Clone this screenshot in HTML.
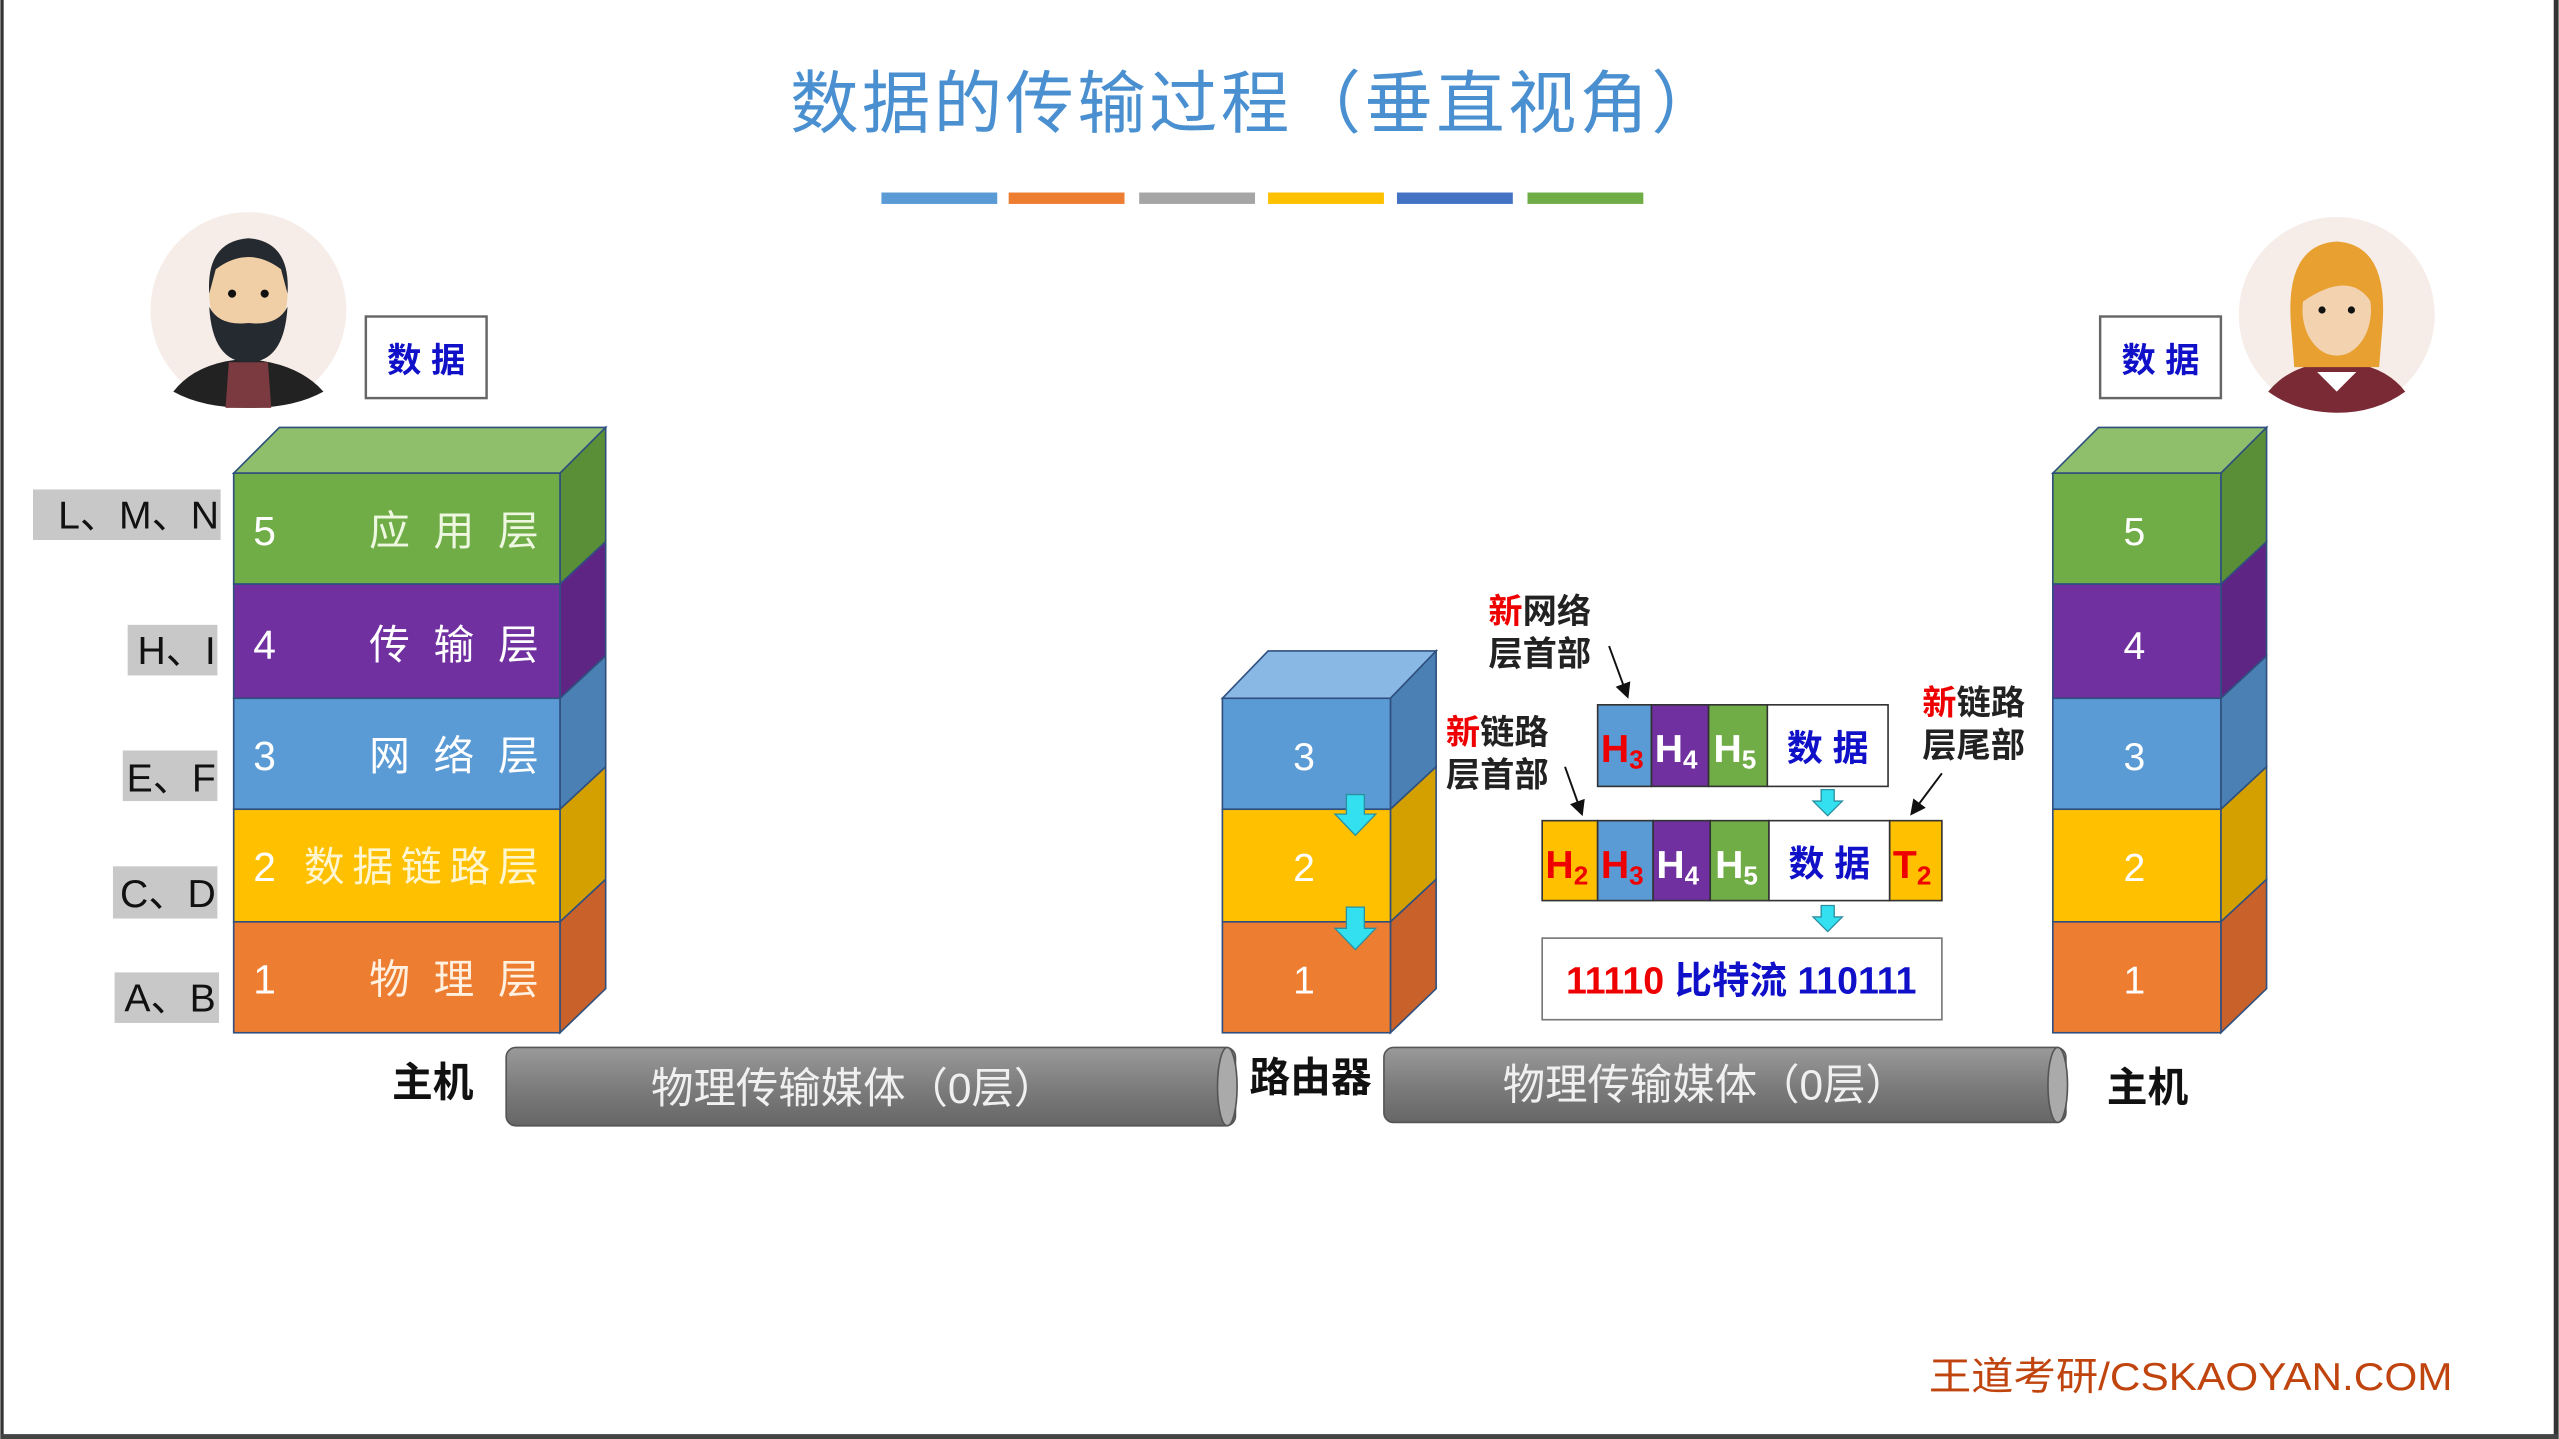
<!DOCTYPE html>
<html><head><meta charset="utf-8"><style>
html,body{margin:0;padding:0;background:#fff;overflow:hidden}
svg{display:block}
text{font-family:"Liberation Sans","Noto Sans CJK SC",sans-serif}
</style></head><body>
<svg width="2559" height="1439" viewBox="0 0 1568 882" xmlns="http://www.w3.org/2000/svg">
<defs>
<linearGradient id="pipe" x1="0" y1="0" x2="0" y2="1">
<stop offset="0" stop-color="#9a9a9a"/><stop offset="0.5" stop-color="#7d7d7d"/><stop offset="1" stop-color="#666"/>
</linearGradient>
<marker id="ah" markerWidth="8" markerHeight="8" refX="6" refY="4" orient="auto"><path d="M0,0 L8,4 L0,8 Z" fill="#111"/></marker>
</defs>
<rect width="1568" height="882" fill="#fff"/>
<rect x="0" y="0" width="2" height="882" fill="#333"/>
<rect x="1565" y="0" width="3" height="882" fill="#333"/>
<rect x="0" y="879" width="1568" height="3" fill="#444"/>

<text x="770" y="78" font-size="42" fill="#4a90d0" text-anchor="middle" letter-spacing="2">数据的传输过程（垂直视角）</text>
<rect x="540" y="118" width="71" height="7" fill="#5b9bd5"/>
<rect x="618" y="118" width="71" height="7" fill="#ed7d31"/>
<rect x="698" y="118" width="71" height="7" fill="#a5a5a5"/>
<rect x="777" y="118" width="71" height="7" fill="#ffc000"/>
<rect x="856" y="118" width="71" height="7" fill="#4472c4"/>
<rect x="936" y="118" width="71" height="7" fill="#70ad47"/>

<!-- avatars -->
<circle cx="152" cy="190" r="60" fill="#f6ece8"/>
<path d="M106,240 Q120,222 150,220 Q182,222 198,240 Q180,250 152,250 Q124,250 106,240Z" fill="#222"/>
<path d="M140,222 L164,222 L166,250 L138,250Z" fill="#7a3a40"/>
<ellipse cx="152" cy="180" rx="24" ry="32" fill="#f0cfa6"/>
<path d="M128,180 Q126,148 152,146 Q178,148 176,180 L172,165 Q152,150 132,165Z" fill="#252a30"/>
<path d="M128,188 Q130,222 152,222 Q174,222 176,188 Q170,200 152,198 Q134,200 128,188Z" fill="#252a30"/>
<circle cx="142" cy="180" r="2.5" fill="#111"/><circle cx="162" cy="180" r="2.5" fill="#111"/>

<circle cx="1432" cy="193" r="60" fill="#f6ece8"/>
<path d="M1390,240 Q1405,222 1432,222 Q1460,222 1474,240 Q1456,253 1432,253 Q1408,253 1390,240Z" fill="#7a2a35"/>
<path d="M1420,228 L1432,240 L1444,228Z" fill="#fff"/>
<path d="M1404,200 Q1400,150 1432,148 Q1464,150 1460,200 L1458,225 L1406,225Z" fill="#e8a030"/>
<ellipse cx="1432" cy="190" rx="21" ry="28" fill="#f3d2b0"/>
<path d="M1411,185 Q1414,155 1440,160 Q1452,170 1453,185 Q1440,165 1411,185Z" fill="#e8a030"/>
<circle cx="1423" cy="190" r="2.2" fill="#111"/><circle cx="1441" cy="190" r="2.2" fill="#111"/>

<!-- data boxes -->
<rect x="224" y="194" width="74" height="50" fill="#fff" stroke="#666" stroke-width="1.5"/>
<text x="261" y="228" font-size="21" font-weight="bold" fill="#1010c8" text-anchor="middle">数 据</text>
<rect x="1287" y="194" width="74" height="50" fill="#fff" stroke="#666" stroke-width="1.5"/>
<text x="1324" y="228" font-size="21" font-weight="bold" fill="#1010c8" text-anchor="middle">数 据</text>

<!-- left stack -->
<g stroke="#2f4f7f" stroke-width="1">
<path d="M143,290 L171,262 L371,262 L343,290Z" fill="#8fbf6a"/>
<path d="M343,290 L371,262 L371,332 L343,358Z" fill="#5a8f38"/>
<path d="M343,358 L371,332 L371,402 L343,428Z" fill="#5e2585"/>
<path d="M343,428 L371,402 L371,470 L343,496Z" fill="#4a80b4"/>
<path d="M343,496 L371,470 L371,539 L343,565Z" fill="#d4a000"/>
<path d="M343,565 L371,539 L371,606 L343,633Z" fill="#c8622a"/>
<rect x="143" y="290" width="200" height="68" fill="#70ad47"/>
<rect x="143" y="358" width="200" height="70" fill="#7030a0"/>
<rect x="143" y="428" width="200" height="68" fill="#5b9bd5"/>
<rect x="143" y="496" width="200" height="69" fill="#ffc000"/>
<rect x="143" y="565" width="200" height="68" fill="#ed7d31"/>
</g>
<g font-size="25" fill="#fff">
<text x="155" y="334">5</text><text x="226" y="334" fill="#eef7e0" textLength="104" lengthAdjust="spacing">应用层</text>
<text x="155" y="404">4</text><text x="226" y="404" textLength="104" lengthAdjust="spacing">传输层</text>
<text x="155" y="472">3</text><text x="226" y="472" textLength="104" lengthAdjust="spacing">网络层</text>
<text x="155" y="540">2</text><text x="186" y="540" fill="#fff6d0" textLength="144" lengthAdjust="spacing">数据链路层</text>
<text x="155" y="609">1</text><text x="226" y="609" fill="#fff0e0" textLength="104" lengthAdjust="spacing">物理层</text>
</g>
<g fill="#c8c8c8">
<rect x="20" y="300" width="115" height="31"/>
<rect x="78" y="383" width="55" height="31"/>
<rect x="75" y="460" width="58" height="31"/>
<rect x="69" y="531" width="64" height="32"/>
<rect x="70" y="596" width="64" height="31"/>
</g>
<g font-size="24" fill="#111" text-anchor="end">
<text x="134" y="324">L、M、N</text>
<text x="132" y="407">H、I</text>
<text x="132" y="485">E、F</text>
<text x="132" y="556">C、D</text>
<text x="132" y="620">A、B</text>
</g>

<!-- router -->
<g stroke="#2f4f7f" stroke-width="1">
<path d="M749,428 L777,399 L880,399 L852,428Z" fill="#8ab8e4"/>
<path d="M852,428 L880,399 L880,470 L852,496Z" fill="#4a80b4"/>
<path d="M852,496 L880,470 L880,539 L852,565Z" fill="#d4a000"/>
<path d="M852,565 L880,539 L880,606 L852,633Z" fill="#c8622a"/>
<rect x="749" y="428" width="103" height="68" fill="#5b9bd5"/>
<rect x="749" y="496" width="103" height="69" fill="#ffc000"/>
<rect x="749" y="565" width="103" height="68" fill="#ed7d31"/>
</g>
<g font-size="24" fill="#fff" text-anchor="middle">
<text x="799" y="472">3</text><text x="799" y="540">2</text><text x="799" y="609">1</text>
</g>
<g fill="#33e0f0" stroke="#2a8fa0" stroke-width="0.8">
<path d="M825,487 L836,487 L836,499 L843,499 L830.5,512 L818,499 L825,499Z"/>
<path d="M825,556 L836,556 L836,569 L843,569 L830.5,582 L818,569 L825,569Z"/>
</g>

<!-- right stack -->
<g stroke="#2f4f7f" stroke-width="1">
<path d="M1258,290 L1286,262 L1389,262 L1361,290Z" fill="#8fbf6a"/>
<path d="M1361,290 L1389,262 L1389,332 L1361,358Z" fill="#5a8f38"/>
<path d="M1361,358 L1389,332 L1389,402 L1361,428Z" fill="#5e2585"/>
<path d="M1361,428 L1389,402 L1389,470 L1361,496Z" fill="#4a80b4"/>
<path d="M1361,496 L1389,470 L1389,539 L1361,565Z" fill="#d4a000"/>
<path d="M1361,565 L1389,539 L1389,606 L1361,633Z" fill="#c8622a"/>
<rect x="1258" y="290" width="103" height="68" fill="#70ad47"/>
<rect x="1258" y="358" width="103" height="70" fill="#7030a0"/>
<rect x="1258" y="428" width="103" height="68" fill="#5b9bd5"/>
<rect x="1258" y="496" width="103" height="69" fill="#ffc000"/>
<rect x="1258" y="565" width="103" height="68" fill="#ed7d31"/>
</g>
<g font-size="24" fill="#fff" text-anchor="middle">
<text x="1308" y="334">5</text><text x="1308" y="404">4</text><text x="1308" y="472">3</text><text x="1308" y="540">2</text><text x="1308" y="609">1</text>
</g>

<!-- pipes -->
<rect x="310" y="642" width="447" height="48" rx="6" fill="url(#pipe)" stroke="#555"/>
<ellipse cx="752" cy="666" rx="6" ry="24" fill="#aaa" stroke="#555"/>
<text x="523" y="676" font-size="26" fill="#f0f0f0" text-anchor="middle">物理传输媒体（0层）</text>
<rect x="848" y="642" width="418" height="46" rx="6" fill="url(#pipe)" stroke="#555"/>
<ellipse cx="1261" cy="665" rx="6" ry="23" fill="#aaa" stroke="#555"/>
<text x="1045" y="674" font-size="26" fill="#f0f0f0" text-anchor="middle">物理传输媒体（0层）</text>

<g font-size="25" font-weight="bold" fill="#111" text-anchor="middle">
<text x="265" y="672">主机</text><text x="803" y="669">路由器</text><text x="1316" y="675">主机</text>
</g>

<!-- packets -->
<g stroke="#333" stroke-width="1">
<rect x="979" y="432" width="33" height="50" fill="#5b9bd5"/>
<rect x="1012" y="432" width="35" height="50" fill="#7030a0"/>
<rect x="1047" y="432" width="36" height="50" fill="#70ad47"/>
<rect x="1083" y="432" width="74" height="50" fill="#fff"/>
<rect x="945" y="503" width="34" height="49" fill="#ffc000"/>
<rect x="979" y="503" width="34" height="49" fill="#5b9bd5"/>
<rect x="1013" y="503" width="35" height="49" fill="#7030a0"/>
<rect x="1048" y="503" width="36" height="49" fill="#70ad47"/>
<rect x="1084" y="503" width="74" height="49" fill="#fff"/>
<rect x="1158" y="503" width="32" height="49" fill="#ffc000"/>
<rect x="945" y="575" width="245" height="50" fill="#fff" stroke="#777"/>
</g>
<g font-size="24" font-weight="bold">
<text x="981" y="467" fill="#e00">H<tspan font-size="16" dy="4">3</tspan></text>
<text x="1014" y="467" fill="#fff">H<tspan font-size="16" dy="4">4</tspan></text>
<text x="1050" y="467" fill="#fff">H<tspan font-size="16" dy="4">5</tspan></text>
<text x="1120" y="466" fill="#1010c8" text-anchor="middle" font-size="22">数 据</text>
<text x="947" y="538" fill="#e00">H<tspan font-size="16" dy="4">2</tspan></text>
<text x="981" y="538" fill="#e00">H<tspan font-size="16" dy="4">3</tspan></text>
<text x="1015" y="538" fill="#fff">H<tspan font-size="16" dy="4">4</tspan></text>
<text x="1051" y="538" fill="#fff">H<tspan font-size="16" dy="4">5</tspan></text>
<text x="1121" y="537" fill="#1010c8" text-anchor="middle" font-size="22">数 据</text>
<text x="1160" y="538" fill="#e00">T<tspan font-size="16" dy="4">2</tspan></text>
<text x="1067" y="609" text-anchor="middle" font-size="23"><tspan fill="#e00">11110 </tspan><tspan fill="#1010c8">比特流 110111</tspan></text>
</g>
<g fill="#33e0f0" stroke="#2a8fa0" stroke-width="0.8">
<path d="M1116,484 L1124,484 L1124,491 L1129,491 L1120,500 L1111,491 L1116,491Z"/>
<path d="M1116,555 L1124,555 L1124,562 L1129,562 L1120,571 L1111,562 L1116,562Z"/>
</g>
<g font-size="21" font-weight="bold" fill="#222">
<text x="912" y="382"><tspan fill="#e00">新</tspan>网络</text>
<text x="912" y="408">层首部</text>
<text x="886" y="456"><tspan fill="#e00">新</tspan>链路</text>
<text x="886" y="482">层首部</text>
<text x="1178" y="438"><tspan fill="#e00">新</tspan>链路</text>
<text x="1178" y="464">层尾部</text>
</g>
<g stroke="#111" stroke-width="1.2" marker-end="url(#ah)">
<line x1="986" y1="396" x2="997" y2="426"/>
<line x1="959" y1="470" x2="969" y2="498"/>
<line x1="1190" y1="474" x2="1172" y2="498"/>
</g>

<text x="1503" y="852" font-size="24" fill="#c0440e" text-anchor="end" textLength="321" lengthAdjust="spacingAndGlyphs">王道考研/CSKAOYAN.COM</text>
</svg>
</body></html>
